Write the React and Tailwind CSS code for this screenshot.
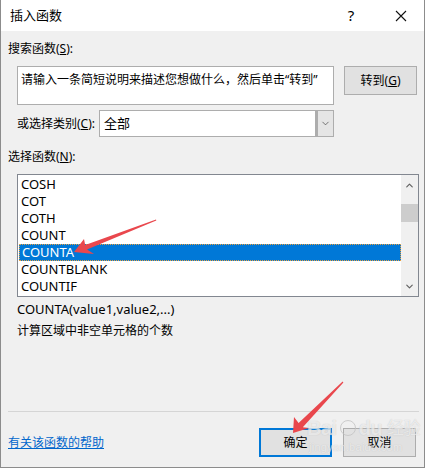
import { ChevronDown, ChevronUp } from 'lucide-react'

const FUNCS = ['COSH', 'COT', 'COTH', 'COUNT', 'COUNTA', 'COUNTBLANK', 'COUNTIF']
const FONT = { fontFamily: '"Noto Sans", "Noto Sans CJK SC", sans-serif' }

function Arrows() {
  return (
    <svg className="absolute inset-0 pointer-events-none" width="425" height="468" viewBox="0 0 425 468">
      <polygon
        points="73,252 83,239 84.2,245 155,219.4 155.3,220.6 86,249.6 93,254"
        fill="#e9474d"
      />
      <polygon
        points="292,433 293,417 297.6,423 341.6,381.6 342.4,382.4 301.8,427.2 308,428"
        fill="#e9474d"
      />
    </svg>
  )
}

// faint baidu jingyan watermark over the buttons
function Watermark() {
  return (
    <div
      className="absolute left-[306px] top-[418px] pointer-events-none select-none text-white/70 leading-none opacity-80"
      style={{ textShadow: '0 0 1px #b5b5b5', fontFamily: '"Liberation Sans", "Noto Sans CJK SC", sans-serif' }}
    >
      <div className="flex items-center gap-[3px] text-[20px] font-bold tracking-tight">
        <span>Bai</span>
        <span className="w-[16px] h-[16px] rounded-full border border-[#c4c4c4]" />
        <span>du</span>
        <span className="text-[17px] font-normal ml-[2px]">经验</span>
      </div>
      <div className="text-[11px] mt-[4px] ml-[2px] tracking-wide">jingyan.baidu.com</div>
    </div>
  )
}

export default function App() {
  return (
    <div
      className="relative w-[425px] h-[468px] bg-[#f0f0f0] border-x border-b border-[#8c8c8c] text-[12px] text-black overflow-hidden"
      style={FONT}
    >
      {/* Title bar */}
      <div className="h-[31px] bg-white flex items-center pl-[9px]">
        <span className="flex-1 text-[13px]">插入函数</span>
        <span className="w-[20px] text-center text-[15px] mr-[34px]">?</span>
        <svg width="12" height="12" viewBox="0 0 12 12" className="mr-[17px]">
          <path d="M1 1L11 11M11 1L1 11" stroke="#111" strokeWidth="1.1" />
        </svg>
      </div>

      <div className="px-[7px]">
        <div className="mt-[9px] h-[18px] leading-[18px]">
          搜索函数(<u>S</u>):
        </div>

        <div className="mt-[8px] flex items-start">
          <div className="ml-[9px] w-[317px] h-[39px] bg-white border border-[#adadad] px-[3px] pt-[5px] leading-[16px]">
            请输入一条简短说明来描述您想做什么，然后单击“转到”
          </div>
          <button className="ml-[10px] w-[73px] h-[29px] bg-[#e1e1e1] border border-[#adadad] flex items-center justify-center">
            转到(<u>G</u>)
          </button>
        </div>

        <div className="mt-[5px] flex items-center h-[27px]">
          <span className="ml-[9px] w-[82px]">或选择类别(<u>C</u>):</span>
          <div className="w-[235px] h-[27px] bg-white border border-[#adadad] flex">
            <span className="flex-1 px-[4px] leading-[25px] text-[13px]">全部</span>
            <div className="w-[18px] h-full bg-[#e5e5e5] border-l-[3px] border-[#adadad] flex items-center justify-center">
              <ChevronDown size={11} strokeWidth={1.5} color="#404040" />
            </div>
          </div>
        </div>

        <div className="mt-[11px] h-[18px] leading-[18px]">
          选择函数(<u>N</u>):
        </div>

        <div className="mt-[8px] ml-[9px] w-[402px] h-[123px] bg-white border border-[#828790] flex">
          <div className="flex-1 pt-[1px] pl-[1px]">
            {FUNCS.map((f) => (
              <div
                key={f}
                className={`h-[17px] pl-[2px] text-[13px] ${
                  f === 'COUNTA'
                    ? 'bg-[#0078d7] text-white border border-dotted border-[#e8a040] leading-[15px] pl-[1px]'
                    : 'leading-[17px]'
                }`}
              >
                {f}
              </div>
            ))}
          </div>
          <div className="w-[17px] h-full bg-[#f0f0f0] flex flex-col items-center">
            <div className="h-[17px] flex items-center justify-center mt-[2px]">
              <ChevronUp size={11} strokeWidth={2.5} color="#606060" />
            </div>
            <div className="mt-[10px] w-full h-[18px] bg-[#cdcdcd]" />
            <div className="flex-1" />
            <div className="h-[17px] flex items-center justify-center mb-[1px]">
              <ChevronDown size={11} strokeWidth={2.5} color="#606060" />
            </div>
          </div>
        </div>

        <div className="mt-[3px] ml-[9px] h-[18px] leading-[18px] text-[13px]">COUNTA(value1,value2,...)</div>
        <div className="mt-[4px] ml-[9px] h-[18px] leading-[18px]">计算区域中非空单元格的个数</div>

        <div className="mt-[71px] w-[411px] h-px bg-[#d5d5d5]" />

        <div className="mt-[16px] flex items-center h-[29px]">
          <a className="flex-1 text-[#0066cc] underline">有关该函数的帮助</a>
          <button className="w-[73px] h-[29px] bg-[#e1e1e1] border-2 border-[#0078d7] flex items-center justify-center">
            确定
          </button>
          <button className="ml-[11px] mr-[1px] w-[73px] h-[29px] bg-[#e1e1e1] border border-[#adadad] flex items-center justify-center">
            取消
          </button>
        </div>
      </div>

      <Watermark />
      <Arrows />
    </div>
  )
}
